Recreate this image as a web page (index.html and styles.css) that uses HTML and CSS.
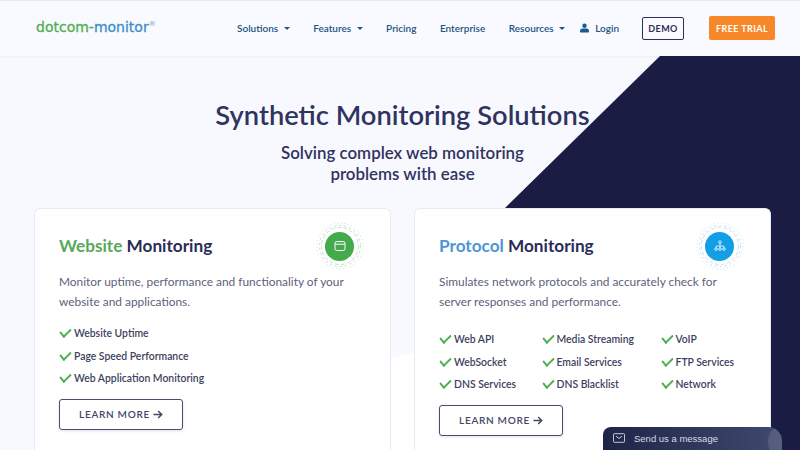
FILE: index.html
```html
<!DOCTYPE html>
<html lang="en">
<head>
    <meta charset="UTF-8">
    <meta name="viewport" content="width=device-width, initial-scale=1.0">
    <title>Synthetic Monitoring Solutions</title>
    <link rel="stylesheet" href="styles.css">
</head>
<body>
    <header class="topbar">
        <a class="logo" href="#"><span class="logo-green">dotcom-</span><span class="logo-blue">monitor</span><sup class="logo-reg">®</sup></a>
        <nav class="menu">
            <a class="menu-item" href="#">Solutions <span class="caret"></span></a>
            <a class="menu-item" href="#">Features <span class="caret"></span></a>
            <a class="menu-item" href="#">Pricing</a>
            <a class="menu-item" href="#">Enterprise</a>
            <a class="menu-item" href="#">Resources <span class="caret"></span></a>
        </nav>
        <a class="login" href="#">
            <svg class="login-icon" viewBox="0 0 12 12"><circle cx="6" cy="3" r="2.9"/><path d="M1 12c-.6 0-1-.4-1-1V9.8C0 8 1.4 6.6 3.2 6.6h5.6C10.6 6.6 12 8 12 9.8V11c0 .6-.4 1-1 1z"/></svg>
            Login
        </a>
        <a class="demo" href="#">DEMO</a>
        <a class="trial" href="#">FREE TRIAL</a>
    </header>

    <main class="hero">
        <div class="bg-dark"></div>
        <div class="bg-white"></div>

        <h1 class="hero-title">Synthetic Monitoring Solutions</h1>
        <p class="hero-sub">Solving complex web monitoring<br>problems with ease</p>

        <div class="cards">
            <section class="card">
                <div class="badge badge-green">
                    <svg viewBox="0 0 48 48" class="rings">
                        <circle cx="24" cy="24" r="18.5" stroke-dasharray="4 2"/>
                        <circle cx="24" cy="24" r="20.5" stroke-dasharray="2.5 2.5"/>
                        <circle cx="24" cy="24" r="23" stroke-dasharray="1 2.5"/>
                    </svg>
                    <span class="badge-dot">
                        <svg viewBox="0 0 12 12" class="badge-icon"><rect x="1" y="1.5" width="10" height="9" rx="1.8" fill="none" stroke="#fff" stroke-width="1"/><path d="M1 4.2h10" stroke="#fff" stroke-width="1"/></svg>
                    </span>
                </div>
                <h2 class="card-title"><span class="green">Website</span> Monitoring</h2>
                <p class="card-text">Monitor uptime, performance and functionality of your website and applications.</p>
                <ul class="checks">
                    <li>Website Uptime</li>
                    <li>Page Speed Performance</li>
                    <li>Web Application Monitoring</li>
                </ul>
                <a class="learn" href="#">LEARN MORE <svg class="arrow" viewBox="0 0 10 9"><path d="M.5 4.5h8M5.2 1l3.5 3.5L5.2 8" fill="none" stroke="#44466a" stroke-width="1.5"/></svg></a>
            </section>

            <section class="card">
                <div class="badge badge-blue">
                    <svg viewBox="0 0 48 48" class="rings">
                        <circle cx="24" cy="24" r="18.5" stroke-dasharray="4 2"/>
                        <circle cx="24" cy="24" r="20.5" stroke-dasharray="2.5 2.5"/>
                        <circle cx="24" cy="24" r="23" stroke-dasharray="1 2.5"/>
                    </svg>
                    <span class="badge-dot">
                        <svg viewBox="0 0 14 14" class="badge-icon"><circle cx="7" cy="2.6" r="1.5" fill="none" stroke="#fff" stroke-width="1"/><path d="M7 4.1v3M2.4 9V7.1h9.2V9M7 7.1V9" fill="none" stroke="#fff" stroke-width=".9"/><circle cx="2.4" cy="10.6" r="1.5" fill="none" stroke="#fff" stroke-width="1"/><circle cx="7" cy="10.6" r="1.5" fill="none" stroke="#fff" stroke-width="1"/><circle cx="11.6" cy="10.6" r="1.5" fill="none" stroke="#fff" stroke-width="1"/></svg>
                    </span>
                </div>
                <h2 class="card-title"><span class="blue">Protocol</span> Monitoring</h2>
                <p class="card-text">Simulates network protocols and accurately check for server responses and performance.</p>
                <ul class="checks checks-grid">
                    <li>Web API</li>
                    <li>Media Streaming</li>
                    <li>VoIP</li>
                    <li>WebSocket</li>
                    <li>Email Services</li>
                    <li>FTP Services</li>
                    <li>DNS Services</li>
                    <li>DNS Blacklist</li>
                    <li>Network</li>
                </ul>
                <a class="learn" href="#">LEARN MORE <svg class="arrow" viewBox="0 0 10 9"><path d="M.5 4.5h8M5.2 1l3.5 3.5L5.2 8" fill="none" stroke="#44466a" stroke-width="1.5"/></svg></a>
            </section>
        </div>

        <div class="chat">
            <svg class="chat-icon" viewBox="0 0 14 11"><rect x=".5" y=".5" width="13" height="10" rx="1" fill="none" stroke="#e8eaf2"/><path d="M3.5 3.5 7 6l3.5-2.5" fill="none" stroke="#e8eaf2"/></svg>
            <span>Send us a message</span>
            <span class="chat-corner"></span>
        </div>
    </main>
</body>
</html>
```

FILE: styles.css
```css
* {
    box-sizing: border-box;
}
html, body {
    height: 100%;
}
body {
    margin: 0;
    height: 450px;
    overflow: hidden;
    font-family: Lato, "Liberation Sans", sans-serif;
    color: #2c2f56;
    background: #fff;
}
a {
    text-decoration: none;
    color: inherit;
}

/* top bar */
.topbar {
    height: 56px;
    display: flex;
    align-items: center;
    padding: 0 0 1px 36px;
    background: #f8faff;
    border-top: 1px solid #e9ebee;
    box-shadow: 0 1px 3px rgba(0, 0, 0, 0.05);
    position: relative;
    z-index: 2;
}
.logo {
    width: 201px;
    font-family: "DejaVu Sans", sans-serif;
    font-size: 14px;
    -webkit-text-stroke: 0.3px;
    margin-top: -3px;
    white-space: nowrap;
}
.logo-green {
    color: #52ae52;
}
.logo-blue {
    color: #3d8fc9;
}
.logo-reg {
    font-size: 7px;
    color: #7fa9c9;
    vertical-align: 6px;
    line-height: 0;
    -webkit-text-stroke: 0;
}
.menu {
    display: flex;
    gap: 23.5px;
}
.menu-item, .login {
    font-size: 10px;
    font-weight: 600;
    color: #24537f;
    white-space: nowrap;
}
.caret {
    display: inline-block;
    margin-left: 3px;
    vertical-align: 2px;
    border: 3.5px solid transparent;
    border-top: 3.5px solid #24537f;
    border-bottom: 0;
    width: 0;
    height: 0;
}
.login {
    display: flex;
    align-items: center;
    gap: 6px;
    margin-left: 15px;
}
.login-icon {
    width: 9px;
    height: 10px;
    fill: #1c5a92;
}
.demo {
    margin-left: 23px;
    width: 42px;
    height: 23px;
    display: flex;
    align-items: center;
    justify-content: center;
    border: 1px solid #2c2f56;
    border-radius: 2px;
    font-size: 9px;
    font-weight: 700;
    letter-spacing: 0.4px;
}
.trial {
    margin-left: 25px;
    width: 66px;
    height: 24px;
    display: flex;
    align-items: center;
    justify-content: center;
    background: #f6882a;
    border-radius: 2px;
    color: #fff;
    font-size: 9px;
    font-weight: 700;
    letter-spacing: 0.4px;
}

/* hero area */
.hero {
    position: relative;
    height: 394px;
    background: #f8f9ff;
    padding-top: 41px;
    overflow: hidden;
}
.bg-dark {
    position: absolute;
    inset: 0;
    background: #1a1c43;
    clip-path: polygon(505px 152px, 660px 0, 800px 0, 800px 394px, 505px 394px);
}
.bg-white {
    position: absolute;
    inset: 0;
    background: #fff;
    clip-path: polygon(34px 394px, 415px 296px, 415px 394px);
}
.hero-title {
    position: relative;
    margin: 0;
    text-align: center;
    font-size: 27.3px;
    font-weight: 600;
    line-height: 36px;
    color: #2f3360;
    padding-left: 5px;
}
.hero-sub {
    position: relative;
    margin: 9px 0 0;
    text-align: center;
    font-size: 16.9px;
    font-weight: 600;
    line-height: 21px;
    color: #2f3360;
    padding-left: 5px;
}

/* cards */
.cards {
    position: relative;
    display: flex;
    gap: 23.5px;
    padding-left: 34px;
    margin-top: 24px;
}
.card {
    position: relative;
    width: 356.5px;
    height: 242px;
    background: #fff;
    border: 1px solid #e8eaf4;
    border-bottom: 0;
    border-radius: 6px 6px 0 0;
    padding: 26px 24px 0;
}
.card-title {
    margin: 0;
    font-size: 17.2px;
    font-weight: 700;
    line-height: 22px;
    color: #2a2c58;
}
.green {
    color: #5aa85a;
}
.blue {
    color: #4c96d7;
}
.card-text {
    margin: 15px 0 0;
    width: 300px;
    font-size: 11.9px;
    line-height: 20px;
    color: #5d5f7d;
}
.checks {
    list-style: none;
    margin: 10px 0 0;
    padding: 0;
    font-size: 10.4px;
    font-weight: 600;
    color: #3d3f60;
}
.checks li {
    position: relative;
    height: 22.6px;
    line-height: 22.6px;
    padding-left: 15px;
    white-space: nowrap;
}
.checks li::before {
    content: "";
    position: absolute;
    left: 1px;
    top: 6px;
    width: 9px;
    height: 5px;
    border-left: 2px solid #4caf50;
    border-bottom: 2px solid #4caf50;
    transform: rotate(-45deg) skew(-6deg);
}
.checks-grid {
    display: grid;
    grid-template-columns: 102.5px 119px 100px;
    margin-top: 16px;
}
.learn {
    display: flex;
    align-items: center;
    justify-content: center;
    gap: 3px;
    width: 124px;
    height: 31px;
    margin-top: 9px;
    border: 1px solid #4a4b72;
    border-radius: 3px;
    font-size: 10px;
    font-weight: 600;
    letter-spacing: 0.7px;
    color: #44466a;
    box-shadow: 0 1px 3px rgba(0, 0, 0, 0.12);
}
.arrow {
    width: 10px;
    height: 9px;
}

/* round icon on the card */
.badge {
    position: absolute;
    right: 26px;
    top: 13px;
    width: 48px;
    height: 48px;
    display: flex;
    align-items: center;
    justify-content: center;
}
.rings {
    position: absolute;
    inset: 0;
    fill: none;
    stroke-width: 0.7;
}
.badge-green .rings {
    stroke: #a5dba8;
}
.badge-blue .rings {
    stroke: #a5d8f3;
}
.badge-dot {
    position: relative;
    width: 29px;
    height: 29px;
    border-radius: 50%;
    display: flex;
    align-items: center;
    justify-content: center;
}
.badge-green .badge-dot {
    background: #43ab4b;
}
.badge-blue .badge-dot {
    background: #139fe6;
}
.badge-icon {
    width: 12px;
    height: 12px;
}

/* chat box */
.chat {
    position: absolute;
    left: 603px;
    bottom: 0;
    width: 179px;
    height: 23px;
    display: flex;
    align-items: center;
    gap: 9px;
    padding: 0 0 1px 10px;
    border-radius: 8px 14px 0 0;
    background: linear-gradient(90deg, #1e2547, #40496e);
    color: #d8dbe6;
    font-family: "Liberation Sans", sans-serif;
    font-size: 9.5px;
    overflow: hidden;
}
.chat-icon {
    width: 12px;
    height: 10px;
}
.chat-corner {
    position: absolute;
    right: -8px;
    top: 0;
    width: 22px;
    height: 30px;
    border-radius: 50%;
    background: rgba(255, 255, 255, 0.12);
}
```
